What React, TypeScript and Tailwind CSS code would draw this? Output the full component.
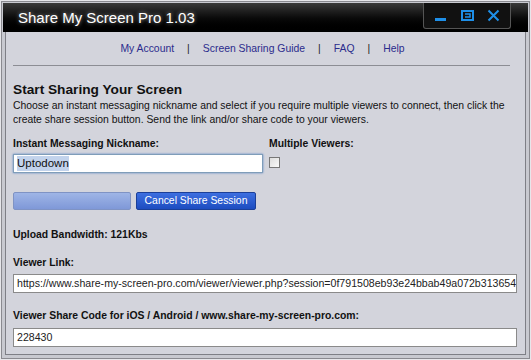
import React from 'react';

const App: React.FC = () => {
  return (
    <div className="w-[531px] h-[360px] bg-[#e6e6ea] p-[1px] font-['Liberation_Sans',Arial,sans-serif] overflow-hidden">
      <div className="relative w-full h-full border border-[#8a8a90] bg-[#c8c9d0] flex flex-col">
        {/* Title bar */}
        <div className="h-[29px] mx-[1px] mt-[1px] bg-gradient-to-b from-[#3a3a3a] via-[#0c0c0c] to-[#000] flex items-center pl-[15px]">
          <span className="text-white text-[15px] leading-none [text-shadow:0_0_4px_rgba(255,255,255,0.6)]">Share My Screen Pro 1.03</span>
        </div>
        {/* Window controls */}
        <div className="absolute top-[1px] left-[421px] w-[88px] h-[26px] bg-[#111] border border-[#555] border-t-0 rounded-b-[3px] flex items-center justify-between px-[10px]">
          <svg width="13" height="13" viewBox="0 0 13 13">
            <rect x="1" y="9" width="11" height="3" fill="#1e8fe8" />
          </svg>
          <svg width="13" height="13" viewBox="0 0 13 13" fill="none" stroke="#1e8fe8" strokeWidth="2">
            <rect x="1" y="2" width="11" height="9" />
            <path d="M4 5h5v3H4" strokeWidth="1.5" />
          </svg>
          <svg width="13" height="13" viewBox="0 0 13 13" stroke="#1e8fe8" strokeWidth="2">
            <path d="M1.5 1.5l10 10M11.5 1.5l-10 10" />
          </svg>
        </div>
        {/* Body */}
        <div className="flex-1 ml-[3px] mr-[3px] mb-[3px] border-l border-r border-b border-[#7e7f86] bg-[#d3d4dc] px-[7px] flex flex-col text-[10.4px] text-[#111]">
          <div className="h-[33px] flex items-center justify-center gap-[13px] text-[#2b2b8c] pr-[6px]">
            <span>My Account</span>
            <span className="text-[#222]">|</span>
            <span>Screen Sharing Guide</span>
            <span className="text-[#222]">|</span>
            <span>FAQ</span>
            <span className="text-[#222]">|</span>
            <span>Help</span>
          </div>
          <div className="h-px bg-[#8c8d94] mr-[8px]" />
          <div className="mt-[15px] text-[13.7px] font-bold leading-[18px]">Start Sharing Your Screen</div>
          <p className="leading-[14px] pr-[10px]">
            Choose an instant messaging nickname and select if you require multiple viewers to connect, then click the create share session button. Send the link and/or share code to your viewers.
          </p>
          <div className="mt-[10px] flex gap-[6px]">
            <div className="flex flex-col">
              <span className="font-bold leading-[14px]">Instant Messaging Nickname:</span>
              <div className="mt-[3px] w-[250px] h-[19px] bg-white border border-[#7f9db9] shadow-[0_0_2px_#5a86c8] flex items-center pl-[3px]">
                <span className="bg-[#c2d3ec] text-[11.5px] leading-[15px]">Uptodown</span>
              </div>
            </div>
            <div className="flex flex-col">
              <span className="font-bold leading-[14px]">Multiple Viewers:</span>
              <div className="mt-[6px] w-[11px] h-[11px] bg-gradient-to-br from-[#ddd] to-[#fafafa] border border-[#777]" />
            </div>
          </div>
          <div className="mt-[19px] flex gap-[5px]">
            <div className="w-[118px] h-[18px] rounded-[2px] bg-gradient-to-b from-[#9fb5e6] to-[#7f98d8] border border-[#7f93c4]" />
            <div className="w-[120px] h-[18px] rounded-[2px] bg-gradient-to-b from-[#3d6fe0] to-[#1d4cc0] border border-[#1b3f98] flex items-center justify-center text-white">
              Cancel Share Session
            </div>
          </div>
          <div className="mt-[18px] font-bold leading-[14px]">Upload Bandwidth: 121Kbs</div>
          <div className="mt-[14px] font-bold leading-[14px]">Viewer Link:</div>
          <div className="mt-[4px] h-[19px] mr-[1px] bg-white border border-[#8a8a8a] flex items-center pl-[3px] overflow-hidden whitespace-nowrap text-[10.6px] text-[#222]">
            https://www.share-my-screen-pro.com/viewer/viewer.php?session=0f791508eb93e24bbab49a072b313654
          </div>
          <div className="mt-[16px] font-bold leading-[14px]">Viewer Share Code for iOS / Android / www.share-my-screen-pro.com:</div>
          <div className="mt-[5px] h-[19px] mr-[1px] bg-white border border-[#8a8a8a] flex items-center pl-[3px] text-[10.6px] text-[#222]">
            228430
          </div>
        </div>
      </div>
    </div>
  );
};

export default App;
